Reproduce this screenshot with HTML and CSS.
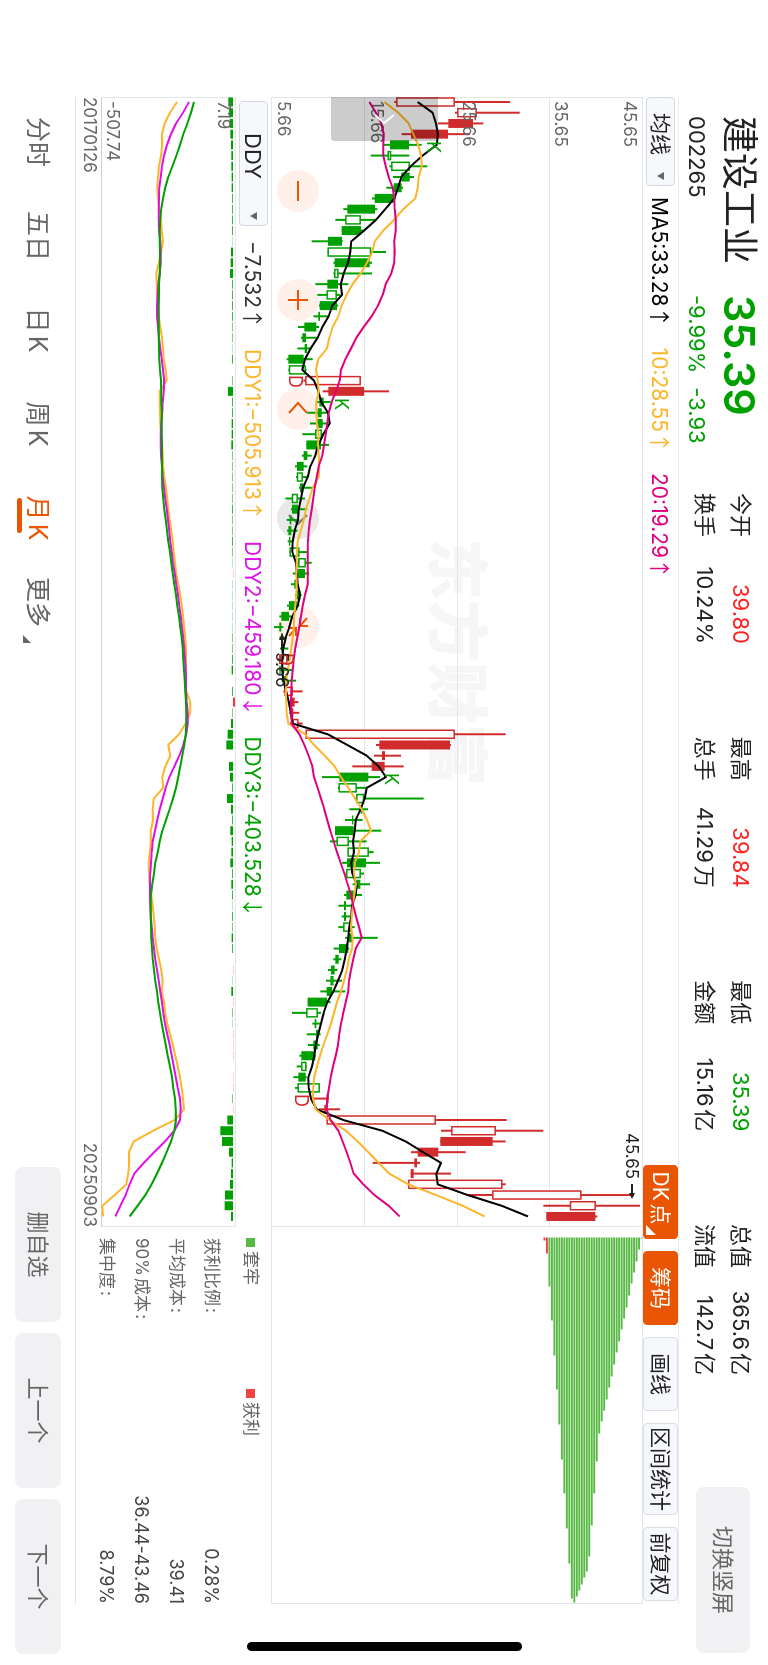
FILE: index.html
```html
<!DOCTYPE html>
<html lang="zh-CN">
<head>
<meta charset="utf-8">
<meta name="viewport" content="width=device-width, initial-scale=1">
<title>建设工业 002265</title>
<link rel="stylesheet" href="styles.css">
</head>
<body>
<div class="app">
  <header class="quote">
    <div class="quote-main">
      <h1 class="quote-name">建设工业</h1>
      <div class="quote-price">35.39</div>
      <div class="quote-code">002265</div>
      <div class="quote-change"><span>-9.99%</span><span>-3.93</span></div>
    </div>
    <dl class="facts">
      <div class="fact"><dt>今开</dt><dd class="up">39.80</dd></div>
      <div class="fact"><dt>最高</dt><dd class="up">39.84</dd></div>
      <div class="fact"><dt>最低</dt><dd class="down">35.39</dd></div>
      <div class="fact"><dt>总值</dt><dd>365.6亿</dd></div>
      <div class="fact"><dt>换手</dt><dd>10.24%</dd></div>
      <div class="fact"><dt>总手</dt><dd>41.29万</dd></div>
      <div class="fact"><dt>金额</dt><dd>15.16亿</dd></div>
      <div class="fact"><dt>流值</dt><dd>142.7亿</dd></div>
    </dl>
    <button class="soft-button rotate-button" type="button">切换竖屏</button>
  </header>

  <main class="board">
    <div class="bar bar-ma">
      <select class="picker picker-ma" aria-label="主图指标"><option>均线</option></select>
      <div class="readings readings-ma">
        <span class="c-black">MA5:33.28<i class="arrow">↑</i></span>
        <span class="c-yellow">10:28.55<i class="arrow">↑</i></span>
        <span class="c-pink">20:19.29<i class="arrow">↑</i></span>
      </div>
      <div class="tools">
        <button class="tool tool-on tool-corner" type="button">DK点</button>
        <button class="tool tool-on" type="button">筹码</button>
        <button class="tool" type="button">画线</button>
        <button class="tool tool-wide" type="button">区间统计</button>
        <button class="tool" type="button">前复权</button>
      </div>
    </div>

    <div class="row row-k">
      <div class="chart chart-k">
        <div class="chart-controls">
          <button class="round" type="button" aria-label="缩小"><svg viewBox="0 0 42 42"><path d="M11 21H31"/></svg></button>
          <button class="round" type="button" aria-label="放大"><svg viewBox="0 0 42 42"><path d="M11 21H31M21 11V31"/></svg></button>
          <button class="round" type="button" aria-label="左移"><svg viewBox="0 0 42 42"><path d="M25 12L15 21L25 30"/></svg></button>
          <button class="round round-off" type="button" aria-label="右移"><svg viewBox="0 0 42 42"><path d="M18 12L27 21L18 30"/></svg></button>
          <button class="round" type="button" aria-label="收起"><svg viewBox="0 0 42 42"><path d="M12 12L20 19M20 11V19H12M30 30L22 23M22 31V23H30"/></svg></button>
        </div>
        <svg class="plot" id="k-plot" viewBox="0 0 1130 372">
          <text class="watermark" x="441" y="209">东方财富</text>
          <path class="grid" d="M0 93.5H1130M0 185.5H1130M0 278.5H1130"/>
          <g id="k-candles"></g>
          <g class="axis">
            <text x="4" y="19">45.65</text>
            <text x="4" y="88">35.65</text>
            <text x="4" y="180">25.66</text>
            <text x="4" y="272">15.66</text>
            <text x="4" y="365">5.66</text>
          </g>
          <g id="k-lines"></g>
          <g class="mark mark-k">
            <text x="44" y="216">K</text>
            <text x="301" y="308">K</text>
            <text x="676" y="258">K</text>
          </g>
          <g class="mark mark-d">
            <text x="278" y="354">D</text>
            <text x="556" y="363">D</text>
            <text x="997" y="348">D</text>
          </g>
          <g class="note">
            <text x="1036" y="17">45.65</text>
            <path d="M1087 11H1097"/><path class="solid" d="M1096 8L1102 11L1096 14Z"/>
            <text x="555" y="367">5.66</text>
            <path d="M553 361H541"/><path class="solid" d="M543 358L536 361L543 364Z"/>
          </g>
        </svg>
        <button class="drawer" type="button" aria-label="展开"><svg viewBox="0 0 44 107"><path d="M18 44L26 54L18 63"/></svg></button>
      </div>
      <div class="chart chart-chips">
        <svg class="plot" viewBox="0 0 377 372"><g id="chips"></g></svg>
      </div>
    </div>

    <div class="bar bar-ddy">
      <select class="picker picker-ddy" aria-label="副图指标"><option>DDY</option></select>
      <div class="readings readings-ddy">
        <span class="c-dark">−7.532<i class="arrow">↑</i></span>
        <span class="c-yellow">DDY1:−505.913<i class="arrow">↑</i></span>
        <span class="c-magenta">DDY2:−459.180<i class="arrow">↓</i></span>
        <span class="c-green">DDY3:−403.528<i class="arrow">↓</i></span>
      </div>
      <div class="legend">
        <span class="legend-item legend-held">套牢</span>
        <span class="legend-item legend-gain">获利</span>
      </div>
    </div>

    <div class="row row-ddy">
      <div class="ddy-side">
        <div class="chart chart-ddy">
          <svg class="plot" viewBox="0 0 1130 135">
            <g id="ddy-bars"></g>
            <g class="axis">
              <text x="4" y="18">7.19</text>
              <text x="4" y="129">-507.74</text>
            </g>
            <g id="ddy-lines"></g>
          </svg>
        </div>
        <div class="dates"><time>20170126</time><time>20250903</time></div>
      </div>
      <table class="cost">
        <tr><th scope="row">获利比例:</th><td>0.28%</td></tr>
        <tr><th scope="row">平均成本:</th><td>39.41</td></tr>
        <tr><th scope="row">90%成本:</th><td>36.44-43.46</td></tr>
        <tr><th scope="row">集中度:</th><td>8.79%</td></tr>
      </table>
    </div>
  </main>

  <footer class="footer">
    <nav class="tabs">
      <button class="tab" type="button">分时</button>
      <button class="tab" type="button">五日</button>
      <button class="tab" type="button">日K</button>
      <button class="tab" type="button">周K</button>
      <button class="tab tab-on" type="button">月K</button>
      <button class="tab tab-more" type="button">更多</button>
    </nav>
    <div class="actions">
      <button class="soft-button" type="button">删自选</button>
      <button class="soft-button" type="button">上一个</button>
      <button class="soft-button" type="button">下一个</button>
    </div>
  </footer>
  <div class="home-bar"></div>
</div>
<script src="charts.js"></script>
</body>
</html>
```

FILE: styles.css
```css
* { box-sizing: border-box; }

html, body {
  margin: 0;
  height: 100%;
  overflow: hidden;
  background: #fff;
}

button, select {
  margin: 0;
  padding: 0;
  border: 0;
  background: none;
  color: inherit;
  font: inherit;
  line-height: 1;
}

/* landscape screen shown on a portrait page */
.app {
  position: fixed;
  top: 0;
  left: 0;
  display: flex;
  flex-direction: column;
  width: 100vh;
  height: 100vw;
  overflow: hidden;
  transform-origin: 0 0;
  transform: translateX(100vw) rotate(90deg);
  color: #222;
  font-family: Inter, "Noto Sans CJK SC", sans-serif;
  font-size: 22px;
  line-height: 1;
  text-autospace: normal;
}

.up { color: #f22; }
.down { color: #00a000; }
.c-black { color: #000; }
.c-dark { color: #333; }
.c-yellow { color: #fdb52b; }
.c-pink { color: #e0007f; }
.c-magenta { color: #e010e8; }
.c-green { color: #00a000; }

/* header */
.quote {
  display: flex;
  align-items: flex-start;
  flex: 0 0 89px;
  padding: 0 12px 0 116px;
}

.quote-main {
  display: grid;
  grid-template-columns: 179px 1fr;
  grid-template-rows: 56px 30px;
  align-items: center;
  width: 377px;
}

.quote-name {
  margin: 0;
  font-size: 37px;
  font-weight: 400;
  line-height: 1;
}

.quote-price {
  color: #00a000;
  font-size: 43px;
  font-weight: 600;
}

.quote-change {
  display: flex;
  gap: 14px;
  color: #00a000;
}

.facts {
  display: grid;
  flex: 1;
  grid-template-columns: repeat(4, 151px);
  justify-content: space-between;
  row-gap: 12px;
  margin: 15px 0 0;
}

.fact {
  display: flex;
  align-items: center;
  justify-content: space-between;
  height: 24px;
}

.fact dd { margin: 0; white-space: nowrap; }

.soft-button {
  width: 155px;
  height: 46px;
  border-radius: 8px;
  background: #f1f1f4;
  color: #666;
}

.rotate-button {
  width: 166px;
  height: 54px;
  margin: 18px 0 0 112px;
}

/* chart area */
.board {
  display: flex;
  flex: 1;
  flex-direction: column;
  margin: 0 61px 0 97px;
  border-top: 1px solid #ebecef;
  border-bottom: 1px solid #e0e1e4;
}

.bar {
  display: flex;
  align-items: center;
  flex: 0 0 35px;
}

.picker {
  height: 29px;
  border: 1px solid #d3d8e0;
  border-radius: 4px;
  appearance: none;
  background: #f6f8fb url("data:image/svg+xml,%3Csvg xmlns='http://www.w3.org/2000/svg' width='8' height='7'%3E%3Cpath d='M0 0H8L4 7Z' fill='%23666'/%3E%3C/svg%3E") no-repeat right 5px center;
  color: #222;
}

.picker-ma {
  width: 89px;
  padding-left: 15px;
  font-size: 21px;
}

.picker-ddy {
  width: 125px;
  margin-left: 4px;
  padding-left: 31px;
}

.readings {
  display: flex;
  gap: 20px;
  font-size: 21px;
  white-space: nowrap;
}

.readings-ma { margin-left: 11px; }
.readings-ddy { margin-left: 15px; }

.arrow {
  font-family: "Noto Sans CJK SC", sans-serif;
  font-style: normal;
}

.tools {
  display: flex;
  gap: 12px;
  height: 100%;
  margin-left: auto;
  padding-right: 3px;
}

.tool {
  position: relative;
  width: 74px;
  border: 1px solid #d9dde5;
  border-radius: 4px;
  background: #f6f8fb;
  color: #222;
  font-size: 21px;
  white-space: nowrap;
}

.tool-wide { width: 92px; }

.tool-on {
  border-color: #ea5504;
  background: #ea5504;
  color: #fff;
}

.tool-corner { padding-right: 8px; }

.tool-corner::after {
  content: "";
  position: absolute;
  right: 3px;
  bottom: 2px;
  border-bottom: 10px solid #fff;
  border-left: 10px solid transparent;
}

.row {
  display: grid;
  grid-template-columns: 1130fr 377fr;
}

.row-k { flex: 372; }
.row-ddy { flex: 160; }

.chart {
  position: relative;
  border: 1px solid #e2e6ed;
}

.chart-chips { border-left: 0; }

.plot {
  position: absolute;
  inset: -1px;
  width: calc(100% + 2px);
  height: calc(100% + 2px);
  pointer-events: none;
}

.chart-controls {
  position: absolute;
  bottom: 5px;
  left: 72px;
  display: flex;
  gap: 67px;
}

.round {
  width: 42px;
  height: 42px;
  border-radius: 50%;
  background: #fff1ea;
  color: #ea5504;
}

.round-off {
  background: #e9e9e9;
  color: #777;
}

.round svg, .drawer svg {
  display: block;
  width: 100%;
  height: 100%;
  fill: none;
  stroke: currentColor;
  stroke-width: 2;
}

.drawer {
  position: absolute;
  bottom: 59px;
  left: -1px;
  width: 44px;
  height: 107px;
  border-radius: 0 3px 3px 0;
  background: rgba(0, 0, 0, 0.2);
  color: #fff;
}

.plot text {
  font-family: Inter, "Noto Sans CJK SC", sans-serif;
  font-size: 17px;
}

.plot .watermark {
  fill: #f6f6f6;
  font-size: 62px;
  font-weight: 900;
}

.plot .mark text { font-size: 18px; }

.grid { fill: none; stroke: #e2e6ed; }
.axis { fill: #666; }
.mark-k { fill: #00a000; }
.mark-d { fill: #d22b2b; }
.note { fill: #222; }
.note path { fill: none; stroke: #222; stroke-width: 2; }
.note .solid { fill: #222; stroke: none; }

.candle-up { fill: #d22b2b; stroke: #d22b2b; }
.candle-down { fill: #00a000; stroke: #00a000; }
.hollow { fill: #fff; }

.line { fill: none; stroke-width: 2; stroke-linejoin: round; }
.line-ma5 { stroke: #000; }
.line-ma10, .line-ddy1 { stroke: #fdb52b; }
.line-ma20 { stroke: #e0007f; }
.line-ddy2 { stroke: #e010e8; }
.line-ddy3 { stroke: #00a000; }

.chip-held { fill: #57b943; }
.chip-gain { fill: #ee4444; }
.flow-in { fill: #f33; }
.flow-out { fill: #00a000; }

/* lower chart */
.legend {
  display: grid;
  grid-template-columns: 151px 1fr;
  width: 366px;
  margin: 6px 0 0 auto;
  color: #666;
  font-size: 17px;
}

.legend-item {
  display: flex;
  align-items: center;
  gap: 4px;
}

.legend-item::before {
  content: "";
  width: 9px;
  height: 9px;
  background: #57b943;
}

.legend-gain::before { background: #ee4444; }

.ddy-side {
  display: flex;
  flex-direction: column;
}

.chart-ddy {
  flex: 1;
  border-bottom-color: #cfd0d4;
}

.dates {
  display: flex;
  align-items: center;
  justify-content: space-between;
  flex: 0 0 25px;
  padding-bottom: 2px;
  color: #666;
  font-size: 17px;
}

.cost {
  align-self: start;
  width: 100%;
  margin-top: 7px;
  padding-left: 11px;
  border-spacing: 0;
  color: #444;
  font-size: 18px;
}

.cost tr { height: 35px; }
.cost th { padding: 0; color: #666; font-size: 17px; font-weight: 400; text-align: left; }
.cost td { padding: 0; text-align: right; }

/* footer */
.footer {
  display: flex;
  align-items: flex-start;
  justify-content: space-between;
  flex: 0 0 75px;
  padding: 14px 11px 0 117px;
}

.tabs {
  display: flex;
  gap: 44px;
  color: #666;
  font-size: 25px;
}

.tab {
  position: relative;
  width: 50px;
  height: 46px;
  white-space: nowrap;
}

.tab-on { color: #ea5504; }

.tab-on::after {
  content: "";
  position: absolute;
  bottom: 2px;
  left: 5px;
  width: 35px;
  height: 5px;
  border-radius: 3px;
  background: #ea5504;
}

.tab-more { margin-left: -10px; }

.tab-more::after {
  content: "";
  position: absolute;
  right: -16px;
  bottom: 8px;
  border-bottom: 8px solid #666;
  border-left: 8px solid transparent;
}

.actions {
  display: flex;
  gap: 11px;
}

.home-bar {
  position: absolute;
  top: 50%;
  right: 14px;
  width: 9px;
  height: 275px;
  margin-top: -138px;
  border-radius: 5px;
  background: #000;
}
```

FILE: charts.js
```js
const NS = "http://www.w3.org/2000/svg";

function add(parent, name, attrs) {
  const node = document.createElementNS(NS, name);
  for (const key in attrs) node.setAttribute(key, attrs[key]);
  parent.appendChild(node);
  return node;
}

const byId = (id) => document.getElementById(id);
const slotX = (i) => 5 + i * 10.716;

// [body low, body high, wick low, wick high, kind]
// r/g: hollow rise/fall, R/G: filled rise/fall
const candles = [
  [469,644,463,810,"r"],[652,710,645,839,"r"],[625,699,594,730,"R"],[513,624,485,690,"R"],[450,507,430,545,"G"],
  [443,453,392,508,"g"],[454,509,448,562,"g"],[484,509,459,522,"G"],[461,485,439,489,"G"],[404,461,396,467,"G"],
  [322,405,310,412,"G"],[316,362,286,405,"g"],[305,363,305,375,"G"],[264,306,215,308,"G"],[263,393,263,438,"g"],
  [284,389,280,396,"G"],[283,295,280,396,"g"],[262,294,226,325,"G"],[260,290,232,300,"g"],[239,291,237,295,"G"],
  [235,240,220,265,"G"],[193,229,174,237,"G"],[187,198,183,232,"G"],[194,201,172,215,"G"],[145,191,140,218,"G"],
  [147,197,145,200,"g"],[196,362,190,362,"r"],[265,372,248,447,"R"],[238,251,230,272,"G"],[233,245,202,262,"G"],
  [230,248,210,262,"G"],[226,245,187,250,"g"],[199,243,199,267,"G"],[191,202,186,215,"G"],[171,191,165,202,"G"],
  [171,188,168,203,"g"],[180,190,177,217,"G"],[156,173,136,195,"g"],[156,174,153,202,"G"],[149,154,140,178,"G"],
  [145,154,141,173,"G"],[147,151,143,161,"G"],[149,178,149,203,"g"],[175,197,172,215,"g"],[173,195,158,208,"G"],
  [163,168,153,176,"G"],[168,182,165,185,"G"],[147,172,141,178,"G"],[124,147,118,155,"G"],[118,124,102,130,"G"],
  [123,128,118,140,"G"],[124,130,120,145,"G"],[118,142,112,146,"r"],[118,122,118,158,"G"],[132,140,125,168,"G"],
  [134,158,130,188,"r"],[152,164,145,175,"R"],[152,160,148,178,"R"],[158,175,150,188,"r"],[197,644,197,797,"r"],
  [418,630,408,633,"R"],[426,435,402,483,"R"],[395,434,337,491,"R"],[298,385,246,420,"G"],[296,350,294,380,"g"],
  [349,372,345,551,"g"],[362,367,328,384,"G"],[336,340,315,368,"G"],[285,341,285,424,"G"],[290,326,270,380,"g"],
  [323,386,323,401,"g"],[321,378,306,420,"G"],[319,362,316,372,"g"],[347,361,338,390,"G"],[319,341,312,366,"G"],
  [312,318,295,340,"G"],[312,318,305,330,"G"],[310,333,295,344,"g"],[326,337,315,413,"G"],[297,325,281,328,"G"],
  [286,296,280,304,"G"],[273,284,264,292,"G"],[272,280,258,306,"g"],[260,276,241,316,"G"],[203,261,203,272,"G"],
  [199,233,156,243,"g"],[224,229,217,240,"G"],[228,234,200,242,"G"],[220,233,204,239,"G"],[184,226,178,228,"G"],
  [184,199,170,200,"g"],[175,197,160,200,"G"],[173,239,165,239,"g"],[260,266,222,266,"R"],[253,259,237,300,"R"],
  [260,587,260,800,"r"],[634,767,603,910,"r"],[601,758,601,797,"R"],[533,595,513,677,"R"],[523,531,398,540,"R"],
  [512,521,512,633,"R"],[505,787,505,797,"r"],[757,1024,680,1182,"r"],[990,1067,910,1200,"r"],[919,1066,919,1072,"R"]
];

const ma5 = [533,578,588,594,590,548,512,484,474,463,436,408,372,334,331,324,311,302,306,277,266,247,233,212,195,187,222,235,244,264,269,250,235,226,211,203,189,183,176,174,164,158,157,168,170,173,180,173,157,148,137,130,127,127,130,139,146,152,158,263,322,380,416,438,380,374,362,347,344,339,342,334,337,350,347,336,334,328,325,320,314,307,294,280,262,251,243,235,227,223,216,205,206,213,230,310,427,497,549,603,589,593,683,785,864];
const ma10 = [433,475,506,520,534,543,545,536,533,526,490,462,430,404,397,381,362,338,320,305,295,278,268,261,235,228,233,236,229,229,231,236,234,236,238,236,218,208,198,191,182,173,171,170,169,170,169,166,163,161,158,154,149,143,139,138,139,140,145,195,222,254,284,303,325,345,365,381,393,361,357,344,342,348,343,338,335,333,338,336,326,320,312,303,291,282,273,262,250,240,231,223,220,219,227,268,318,353,385,416,448,505,588,668,734];
const ma20 = [388,408,424,431,430,430,437,446,458,463,464,467,467,463,464,463,454,437,428,414,395,371,349,333,316,303,299,288,275,266,262,257,252,247,236,230,224,220,215,210,206,204,203,203,203,203,195,188,183,178,172,166,161,158,155,154,153,154,155,178,193,206,217,222,233,243,253,262,271,281,291,302,313,323,333,340,348,357,365,347,340,333,327,325,317,310,303,298,294,287,279,272,267,262,260,272,295,308,320,331,341,370,403,446,479];

const ddy1 = [532,511,495,487,488,484,478,475,473,475,479,484,486,490,484,478,470,471,472,474,477,482,487,490,492,498,501,480,480,481,482,484,487,489,491,494,499,503,506,510,515,519,522,526,530,536,542,546,550,554,557,559,559,558,559,560,572,572,558,538,506,512,497,488,491,462,459,460,453,454,450,447,448,450,455,459,462,465,467,471,478,485,489,486,493,497,503,511,520,527,534,541,546,550,553,525,460,402,388,389,386,380,345,308,310];
const ddy2 = [568,550,529,514,502,493,487,483,479,478,477,477,478,482,483,483,480,476,474,472,472,475,478,482,486,490,494,492,489,488,485,483,483,484,487,489,493,497,501,505,509,512,516,520,525,530,535,539,543,547,551,554,556,558,559,559,561,564,564,560,551,539,524,509,498,489,480,473,466,459,456,454,452,451,451,452,453,456,459,463,467,472,477,482,487,491,496,503,510,516,522,528,534,541,543,541,524,496,464,432,404,390,378,362,347];
const ddy3 = [583,574,563,551,541,530,518,506,497,490,485,482,480,480,481,481,480,478,478,477,477,477,477,478,479,481,484,485,485,486,486,486,487,487,487,487,488,491,494,498,502,506,511,515,519,524,529,533,538,542,546,549,551,553,555,557,559,560,560,558,554,548,542,536,529,520,510,499,488,480,474,467,463,458,454,453,453,454,455,457,459,463,467,472,476,481,486,492,498,504,511,517,521,526,528,529,524,514,501,487,472,456,437,414,390];

// net flow of each month; below zero hangs under the base line
const flow = [-14,-12,-10,-8,-6,-5,-5,-4,-4,-3,-3,-3,-3,-1,-6,-7,-9,-3,-3,-3,-3,-2,-2,-1,-3,0,-2,-15,-3,-3,-4,-4,-5,-2,-2,-2,-2,-2,-3,-2,-2,-3,-2,-1,1,-1,-1,-1,-1,-1,-2,-2,-3,-4,0,-3,6,-2,-6,-16,-20,0,-12,-9,-3,-18,-6,-3,-8,-4,-5,-8,-3,-5,-3,-1,-3,-2,-4,-3,0,1,-1,-5,1,-2,-1,1,1,1,0,1,1,-2,1,-17,-38,-33,-12,-4,-6,-9,-24,-25,-6];

// holders per price step, highest price first
const chips = [1,12,24,35,46,58,70,81,92,104,115,127,139,150,162,173,184,196,224,256,288,319,334,340,347,353,359,365,361,326,291,256,222,187,152,118,83,49,16,3];

const priceY = (v) => (1209 - v) / 3;
const ddyY = (v) => (709 - v) / 3;

function drawCandles() {
  const layer = byId("k-candles");
  candles.forEach(([low, high, wickLow, wickHigh, kind], i) => {
    const rise = kind.toLowerCase() === "r";
    const hollow = kind === kind.toLowerCase();
    const g = add(layer, "g", { class: rise ? "candle-up" : "candle-down" });
    const x = slotX(i);
    add(g, "path", { d: `M${x} ${priceY(wickHigh)}V${priceY(wickLow)}`, "stroke-width": 2 });
    const inset = hollow ? 1 : 0;
    add(g, "rect", {
      x: x - 4.5 + inset / 2, y: priceY(high) + inset / 2,
      width: 9 - inset, height: Math.max((high - low) / 3 - inset, 1),
      "stroke-width": hollow ? 1.5 : 0,
      ...(hollow ? { class: "hollow" } : {})
    });
  });
}

function drawLine(layer, values, toY, name) {
  const points = values.map((v, i) => `${slotX(i)},${toY(v)}`).join(" ");
  add(byId(layer), "polyline", { points, class: `line line-${name}` });
}

function drawFlow() {
  const layer = byId("ddy-bars");
  flow.forEach((v, i) => {
    if (!v) return;
    const size = Math.max(Math.abs(v) / 3, 1);
    add(layer, "rect", {
      x: slotX(i) - 4.5, y: v > 0 ? 3 - size : 3,
      width: 9, height: size,
      class: v > 0 ? "flow-in" : "flow-out",
      opacity: Math.min(1, Math.abs(v) / 4)
    });
  });
}

function drawChips() {
  const layer = byId("chips");
  chips.forEach((length, i) => {
    add(layer, "rect", {
      x: 11, y: 0.5 + i * 2.49, width: length, height: 1.9,
      class: i < 38 ? "chip-held" : "chip-gain"
    });
  });
}

drawCandles();
drawLine("k-lines", ma5, priceY, "ma5");
drawLine("k-lines", ma10, priceY, "ma10");
drawLine("k-lines", ma20, priceY, "ma20");
drawFlow();
drawLine("ddy-lines", ddy1, ddyY, "ddy1");
drawLine("ddy-lines", ddy2, ddyY, "ddy2");
drawLine("ddy-lines", ddy3, ddyY, "ddy3");
drawChips();
```
